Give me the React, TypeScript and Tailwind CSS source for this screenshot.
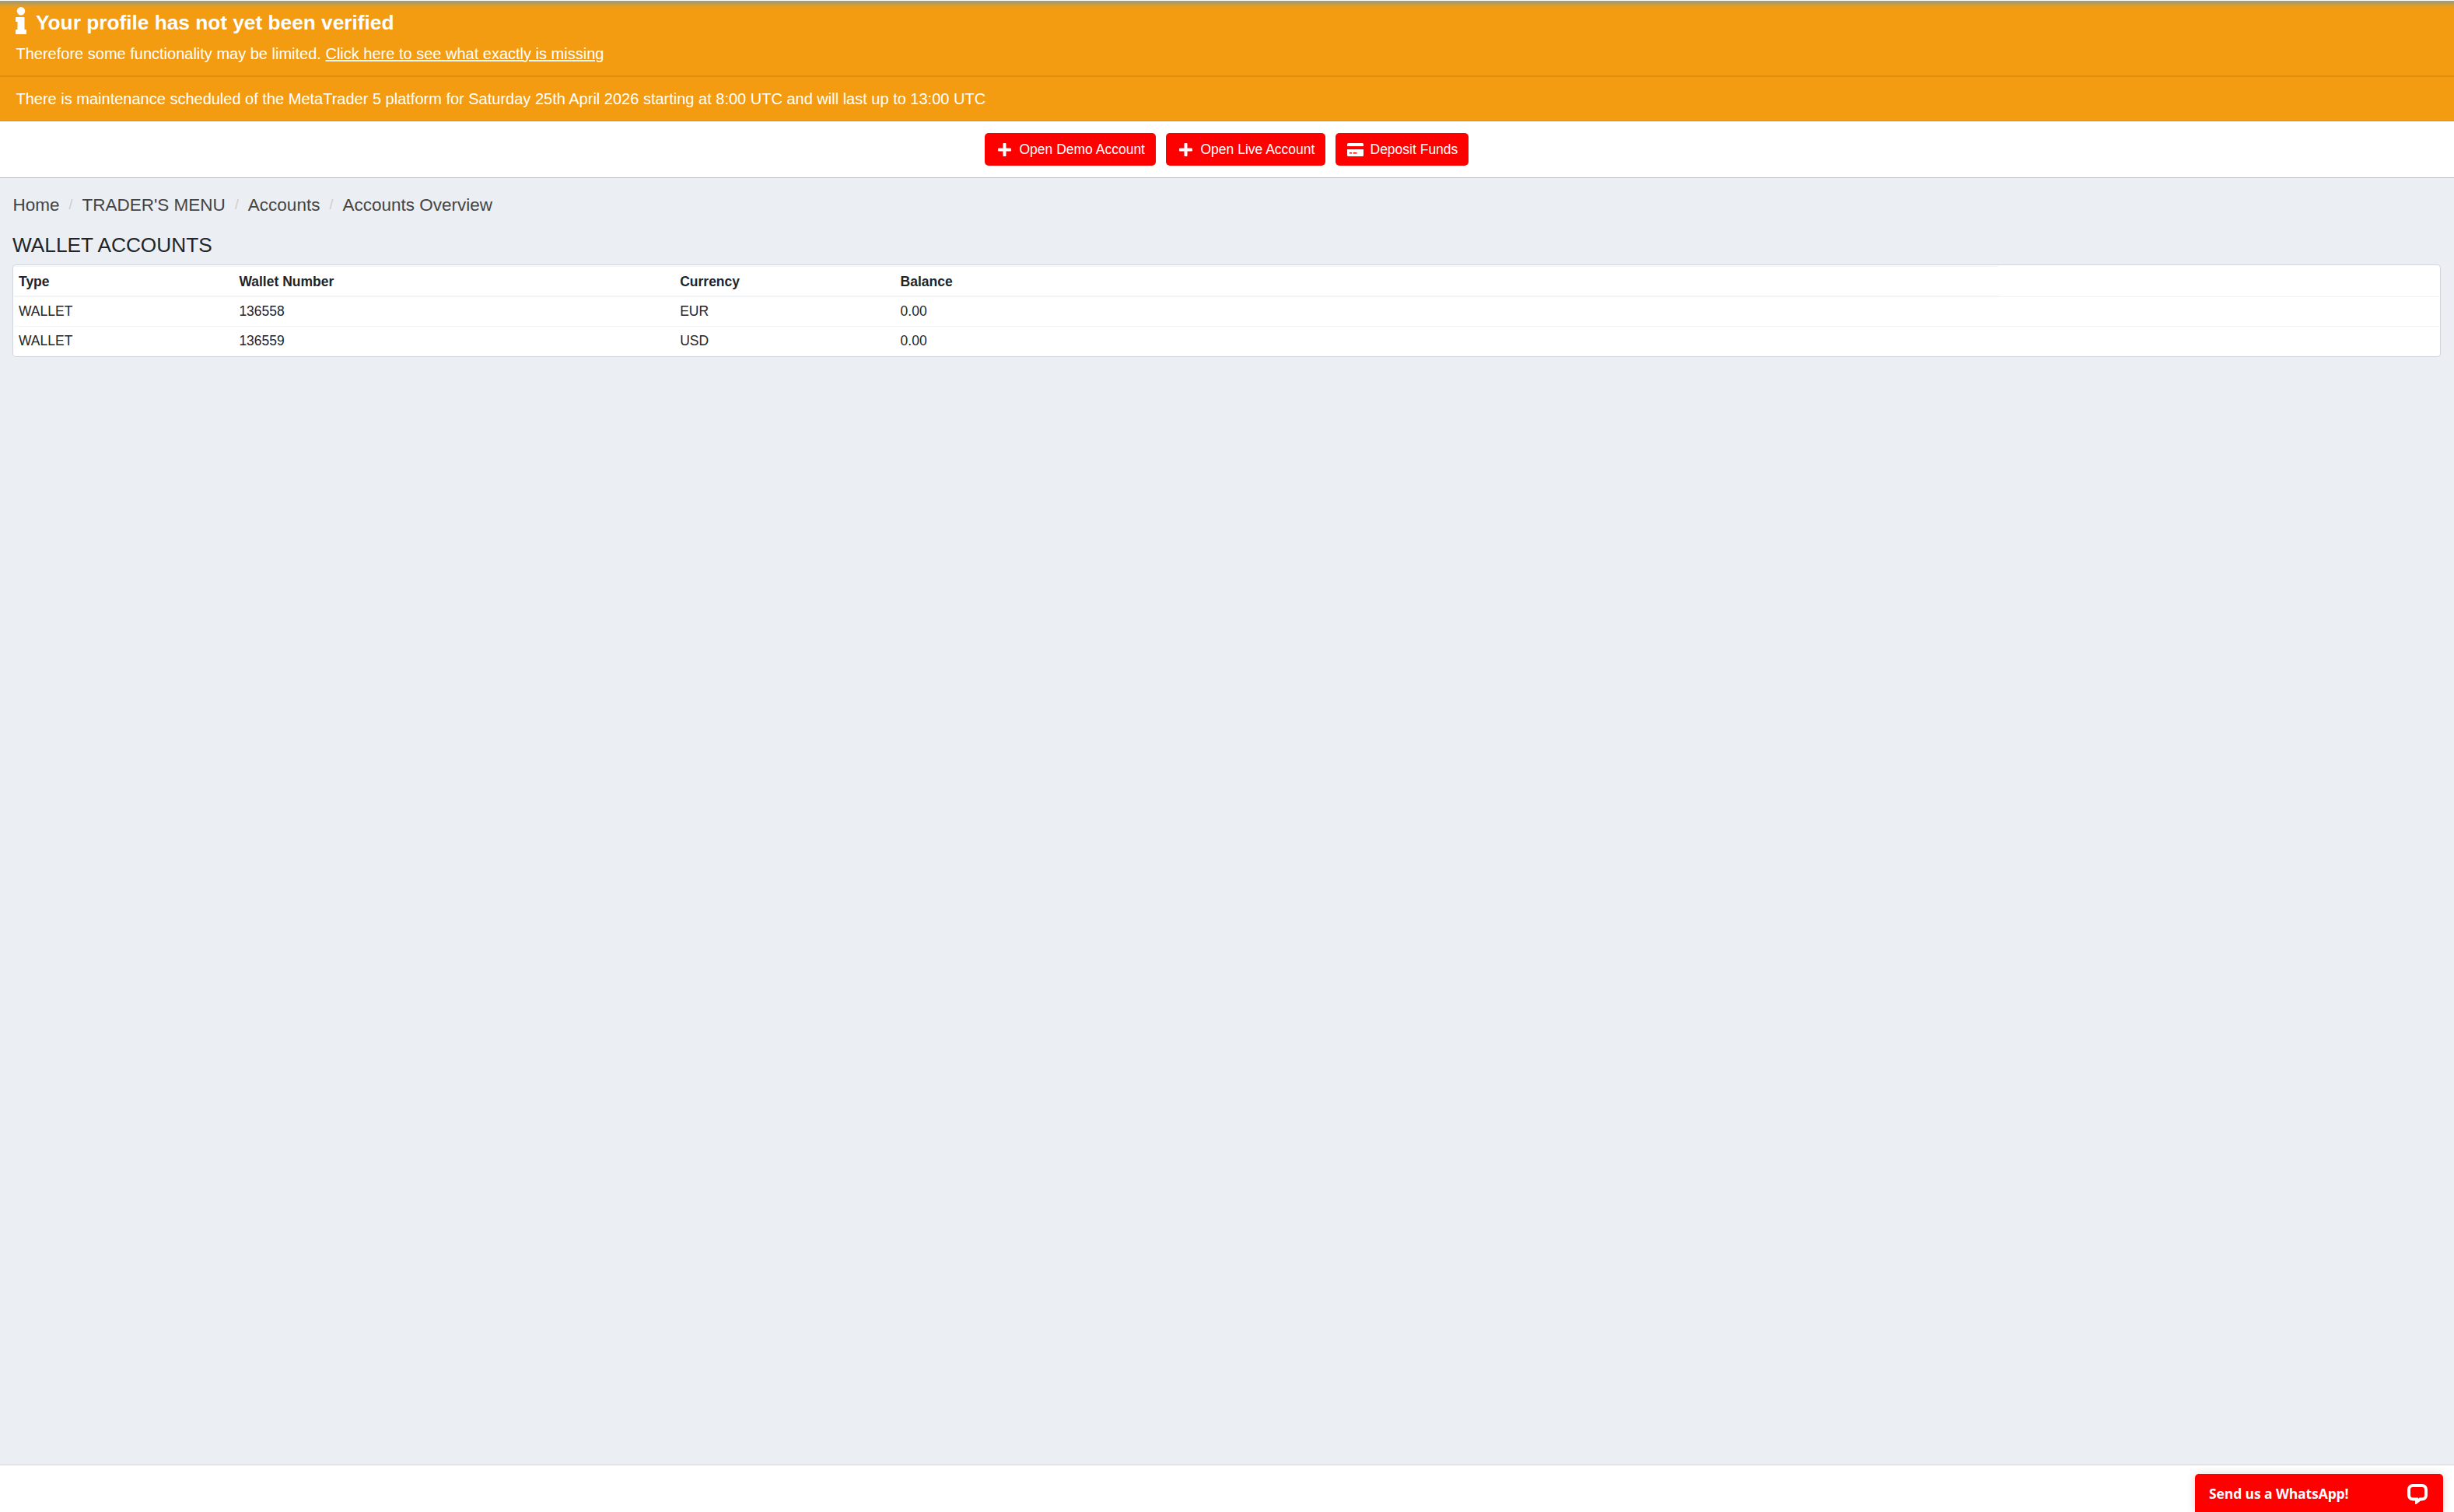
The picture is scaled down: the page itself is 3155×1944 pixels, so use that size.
import { ReactNode } from 'react';

interface Wallet {
    type: string;
    number: string;
    currency: string;
    balance: string;
}

const wallets: Wallet[] = [
    { type: 'WALLET', number: '136558', currency: 'EUR', balance: '0.00' },
    { type: 'WALLET', number: '136559', currency: 'USD', balance: '0.00' },
];

const breadcrumbs = ['Home', "TRADER'S MENU", 'Accounts', 'Accounts Overview'];

const InfoIcon = () => (
    <svg width="14" height="36" viewBox="0 0 14 36" fill="white" className="shrink-0">
        <circle cx="7" cy="5.2" r="5.2" />
        <path d="M1 13h9.500a1 1 0 0 1 1 1v15H13a1 1 0 0 1 1 1v4a1 1 0 0 1-1 1H1a1 1 0 0 1-1-1v-4a1 1 0 0 1 1-1h1.500V19H1a1 1 0 0 1-1-1v-4a1 1 0 0 1 1-1z" />
    </svg>
);

const PlusIcon = () => (
    <svg width="17" height="17" viewBox="0 0 17 17" fill="white" className="shrink-0">
        <path d="M7.500 0h2a1 1 0 0 1 1 1v5.500H16a1 1 0 0 1 1 1v2a1 1 0 0 1-1 1h-5.500V16a1 1 0 0 1-1 1h-2a1 1 0 0 1-1-1v-5.500H1a1 1 0 0 1-1-1v-2a1 1 0 0 1 1-1h5.500V1a1 1 0 0 1 1-1z" />
    </svg>
);

const CardIcon = () => (
    <svg width="21" height="17" viewBox="0 0 21 17" fill="white" className="shrink-0">
        <path d="M0 4V1.500A1.500 1.500 0 0 1 1.500 0h18A1.500 1.500 0 0 1 21 1.500V4z" />
        <path fillRule="evenodd" d="M0 8h21v7.500a1.500 1.500 0 0 1-1.500 1.500h-18A1.500 1.500 0 0 1 0 15.500zM3 12v1.500h3V12zM7.500 12v1.500h5V12z" />
    </svg>
);

const ChatIcon = () => (
    <svg width="26" height="26" viewBox="0 0 26 26" fill="none" className="shrink-0">
        <path d="M7 2h12a5 5 0 0 1 5 5v7.500a5 5 0 0 1-5 5h-2.500L12 23v-3.500H7a5 5 0 0 1-5-5V7a5 5 0 0 1 5-5z" stroke="white" strokeWidth="4" />
    </svg>
);

const ActionButton = ({ icon, label, className }: { icon: ReactNode; label: string; className: string }) => (
    <button className={`flex h-[42px] items-center rounded-[5px] bg-[#ff0000] text-[17.5px] whitespace-nowrap text-white ${className}`}>
        {icon}
        <span>{label}</span>
    </button>
);

const headCell = 'border-y border-[#f2f3f4] pt-px pl-[6px]';
const bodyCell = 'border-t border-[#f2f3f4] pl-[6px]';

export default function App() {
    return (
        <div className="flex h-[1944px] flex-col bg-[#ebeff3] font-['Liberation_Sans',Arial,sans-serif] text-[#212529]">
            {/* Notices */}
            <div className="h-px bg-white" />
            <div className="h-[98px] border-b-2 border-[#e08e0b] bg-[#f39c12] bg-[linear-gradient(to_bottom,#a39c7c_0px,#ad9b69_2px,#cf9c40_5px,#eb9c1d_8px,#f39c12_11px)] px-5 text-white">
                <div className="flex h-[54px] items-start pt-2">
                    <InfoIcon />
                    <h4 className="ml-3 text-[26.25px] leading-[40px] font-bold">Your profile has not yet been verified</h4>
                </div>
                <p className="pl-[0.500px] text-[20px] leading-[28px]">
                    Therefore some functionality may be limited.{' '}
                    <a className="underline">Click here to see what exactly is missing</a>
                </p>
            </div>
            <div className="flex h-[57px] items-center border-b border-[#e08e0b] bg-[#f39c12] pl-[20.500px] text-[20px] text-white">
                There is maintenance scheduled of the MetaTrader 5 platform for Saturday 25th April 2026 starting at 8:00 UTC and
                will last up to 13:00 UTC
            </div>

            <div className="flex h-[73px] items-center justify-center gap-[13px] border-b border-[#b9bcc0] bg-white pr-[2px]">
                <ActionButton icon={<PlusIcon />} label="Open Demo Account" className="w-[220px] gap-[11px] pl-[17px]" />
                <ActionButton icon={<PlusIcon />} label="Open Live Account" className="w-[205px] gap-[11px] pl-[17px]" />
                <ActionButton icon={<CardIcon />} label="Deposit Funds" className="w-[171px] gap-[9px] pl-[15px]" />
            </div>

            <main className="flex-1 px-[16px] pt-[16px]">
                <nav className="flex h-[36px] items-center pt-px pl-[0.500px] text-[22.5px] text-[#444444]">
                    {breadcrumbs.map((item, index) => (
                        <div key={item} className="flex items-center">
                            {index > 0 && <span className="w-[29px] text-center text-[17.5px] text-[#cccccc]">/</span>}
                            <a>{item}</a>
                        </div>
                    ))}
                </nav>
                <h1 className="mt-[18px] h-[41px] text-[26.25px] leading-[32px]">WALLET ACCOUNTS</h1>

                <div className="mr-px h-[119px] rounded-[4px] border border-[#cfd4de] bg-white px-px pt-px">
                    <table className="w-full table-fixed border-separate border-spacing-0 text-left text-[17.5px]">
                        <thead>
                            <tr className="h-[39px]">
                                <th className={`w-[283.400px] ${headCell}`}>Type</th>
                                <th className={`w-[566.800px] ${headCell}`}>Wallet Number</th>
                                <th className={`w-[283.400px] ${headCell}`}>Currency</th>
                                <th className={`w-[283.400px] ${headCell}`}>Balance</th>
                                <th className={headCell} />
                                {/* actions column has no heading */}
                                <td className="w-[566.800px]" />
                            </tr>
                        </thead>
                        <tbody>
                            {wallets.map((wallet) => (
                                <tr key={wallet.number} className="h-[38px]">
                                    <td className={bodyCell}>{wallet.type}</td>
                                    <td className={bodyCell}>{wallet.number}</td>
                                    <td className={bodyCell}>{wallet.currency}</td>
                                    <td className={bodyCell}>{wallet.balance}</td>
                                    <td className={bodyCell} />
                                    <td className={bodyCell} />
                                </tr>
                            ))}
                        </tbody>
                    </table>
                </div>
            </main>

            <footer className="flex h-[61px] items-end justify-end border-t border-[#cfd4de] bg-white pr-[14px]">
                <button className="flex h-[49px] w-[319px] items-start justify-between rounded-t-[5px] bg-[#ff0000] pt-[13px] pr-5 pl-[18px] font-['Open_Sans','Noto_Sans',sans-serif] text-[17.5px] leading-[25px] font-bold tracking-[-0.006em] whitespace-nowrap text-white shadow-[0_0_12px_rgba(0,0,0,0.15)]">
                    Send us a WhatsApp!
                    <ChatIcon />
                </button>
            </footer>
        </div>
    );
}
